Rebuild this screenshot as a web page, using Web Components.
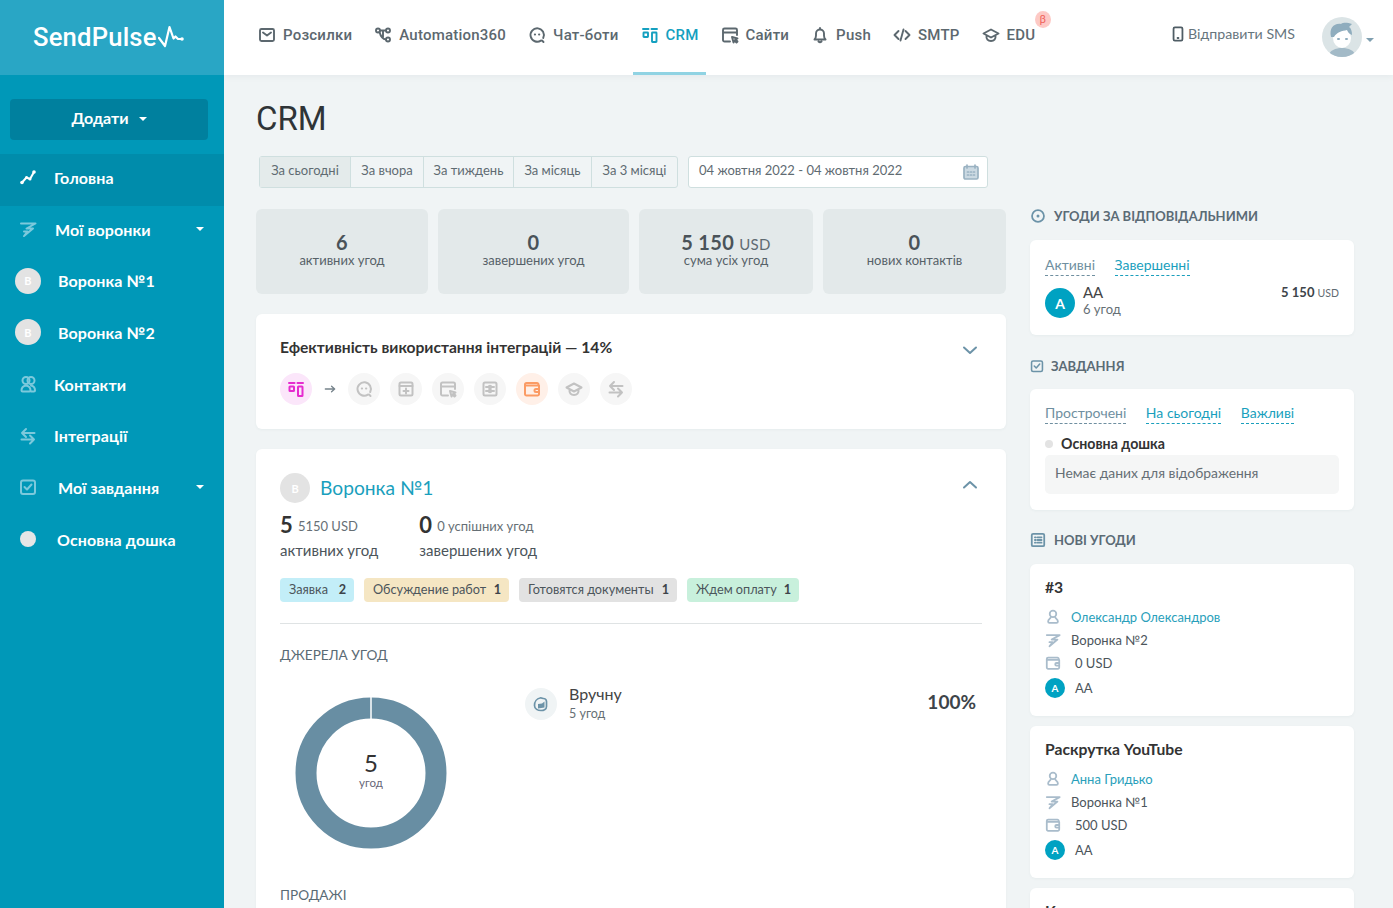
<!DOCTYPE html>
<html lang="uk">
<head>
<meta charset="utf-8">
<title>CRM</title>
<style>
  html, body { margin: 0; height: 100%; overflow: hidden; }
  body { font-family: Lato, "Noto Sans", sans-serif; color: #333; background: #f0f4f5; }
</style>
</head>
<body>
<sp-app>
  <sp-sidebar slot="side">
    <sp-nav-item icon="chart" active style="--gap:13px">Головна</sp-nav-item>
    <sp-nav-item icon="funnel" dim caret style="--gap:14px">Мої воронки</sp-nav-item>
    <sp-nav-item badge="В" style="--gap:17px">Воронка №1</sp-nav-item>
    <sp-nav-item badge="В" style="--gap:17px">Воронка №2</sp-nav-item>
    <sp-nav-item icon="contacts" dim style="--gap:13px">Контакти</sp-nav-item>
    <sp-nav-item icon="swap" dim style="--gap:13px">Інтеграції</sp-nav-item>
    <sp-nav-item icon="check" dim caret style="--gap:17px">Мої завдання</sp-nav-item>
    <sp-nav-item icon="dot" style="--gap:16px">Основна дошка</sp-nav-item>
  </sp-sidebar>

  <sp-topbar slot="top">
    <sp-top-item icon="mail">Розсилки</sp-top-item>
    <sp-top-item icon="nodes">Automation360</sp-top-item>
    <sp-top-item icon="bot">Чат-боти</sp-top-item>
    <sp-top-item icon="crm" active>CRM</sp-top-item>
    <sp-top-item icon="site">Сайти</sp-top-item>
    <sp-top-item icon="bell">Push</sp-top-item>
    <sp-top-item icon="code">SMTP</sp-top-item>
    <sp-top-item icon="edu" beta>EDU</sp-top-item>
  </sp-topbar>

  <sp-page>
    <sp-period-bar slot="head"></sp-period-bar>

    <sp-stat-row slot="left">
      <sp-stat value="6" style="--w:172">активних угод</sp-stat>
      <sp-stat value="0" style="--w:191">завершених угод</sp-stat>
      <sp-stat value="5 150" unit="USD" style="--w:174">сума усіх угод</sp-stat>
      <sp-stat value="0" style="--w:183">нових контактів</sp-stat>
    </sp-stat-row>

    <sp-integrations slot="left"></sp-integrations>
    <sp-funnel slot="left"></sp-funnel>

    <sp-side-heading slot="right" icon="target">Угоди за відповідальними</sp-side-heading>
    <sp-card slot="right" class="owners">
      <sp-tabs>
        <sp-tab muted>Активні</sp-tab>
        <sp-tab>Завершенні</sp-tab>
      </sp-tabs>
      <sp-owner-row></sp-owner-row>
    </sp-card>

    <sp-side-heading slot="right" icon="check" style="--gap:7px;--top:24px;--mb:16px;--hsize:14px">Завдання</sp-side-heading>
    <sp-card slot="right" class="tasks">
      <sp-tabs>
        <sp-tab muted>Прострочені</sp-tab>
        <sp-tab>На сьогодні</sp-tab>
        <sp-tab>Важливі</sp-tab>
      </sp-tabs>
      <sp-board-empty></sp-board-empty>
    </sp-card>

    <sp-side-heading slot="right" icon="list" style="--top:23px">Нові угоди</sp-side-heading>
    <sp-deal slot="right" title="#3" person="Олександр Олександров" funnel="Воронка №2" sum="0 USD"></sp-deal>
    <sp-deal slot="right" title="Раскрутка YouTube" person="Анна Гридько" funnel="Воронка №1" sum="500 USD"></sp-deal>
    <sp-deal slot="right" title="К"></sp-deal>
  </sp-page>
</sp-app>

<script>
const SP_ICONS = {
  chart: '<path d="M3 14.500 7.500 9.500 11 11 15 4" fill="none" stroke-width="2"/><circle cx="3" cy="14.500" r="1.800" fill="currentColor" stroke="none"/><circle cx="7.500" cy="9.500" r="1.500" fill="currentColor" stroke="none"/><circle cx="11" cy="11" r="1.500" fill="currentColor" stroke="none"/><circle cx="15" cy="4" r="1.800" fill="currentColor" stroke="none"/>',
  funnel: '<path d="M2 3.500H16.500L7.500 8.500H14L5 16 8.500 11.500H5"/>',
  contacts: '<circle cx="7" cy="5.500" r="3.500"/><circle cx="12" cy="5.500" r="3.500"/><path d="M2.500 15.500c0-3 1.500-4.500 4.500-5 3 .5 4.500 2 4.500 5 0 .5-.5 1-1 1H3.500c-.5 0-1-.5-1-1ZM12 10.500c2.500.5 4 2 4 5 0 .5-.5 1-1 1h-3"/>',
  swap: '<path d="M15.500 6H3M7 2 3 6 7 10M2.500 12.500H15M11 8.500l4 4-4 4"/>',
  check: '<rect x="2" y="2.500" width="14" height="13.500" rx="2"/><path d="M5.500 9 8 11.500 12.500 6.500"/>',
  mail: '<rect x="2" y="3" width="14" height="12" rx="1.500"/><path d="M5 6.500 9 9.500 13 6.500"/>',
  nodes: '<circle cx="4" cy="4.500" r="2"/><circle cx="14" cy="4.500" r="2"/><circle cx="14" cy="13.500" r="2"/><path d="M6 4.500h6M5.500 6c1 4 3 7 6.500 7.500M9 5v6"/>',
  bot: '<path d="M14 14.500 15.500 16M15.200 12a6.700 6.700 0 1 0-2.300 2.600"/><path d="M6.800 8.500h.3M11 8.500h.3"/>',
  crm: '<path d="M2 3h5.500M10.500 3H16"/><rect x="2.500" y="6.500" width="4.500" height="4.500" rx=".5"/><rect x="11" y="6.500" width="4.500" height="9.500" rx=".5"/>',
  site: '<path d="M9 15.500H3.500A1.500 1.500 0 0 1 2 14V4a1.500 1.500 0 0 1 1.500-1.500h11A1.500 1.500 0 0 1 16 4v5M2 6.500h14M11 11l5.500 1.500-2 1 2 2-1 1-2-2-1 2Z"/>',
  bell: '<path d="M3.500 13.500c1-1 1.500-2 1.500-4V7.500a4 4 0 0 1 8 0v2c0 2 .5 3 1.500 4ZM7.500 15.500c.8.800 2.200.800 3 0M9 2v1.500"/>',
  code: '<path d="M5.500 5 1.500 9l4 4M12.500 5l4 4-4 4M10.500 3.500l-3 11"/>',
  edu: '<path d="M1.500 7.500 9 3.500l7.500 4L9 11.500ZM4.500 9.500c-.5 3.500 1.500 5.500 4.500 5.500s5-2 4.500-5.500"/>',
  phone: '<rect x="4" y="1.500" width="10" height="15" rx="1.500"/><path d="M8.500 13.500h1"/>',
  wallet: '<path d="M15.500 5.500V4.500a1.500 1.500 0 0 0-1.500-1.500H3.500A1.500 1.500 0 0 0 2 4.500V14a1.500 1.500 0 0 0 1.500 1.500h11A1.500 1.500 0 0 0 16 14V5.500H3.500"/><path d="M16 9h-3a1.500 1.500 0 0 0 0 3h3"/>',
  user: '<circle cx="9" cy="5.500" r="3.700"/><path d="M6.500 9c0 2-3 2.500-3 5 0 1 .5 1.500 1.500 1.500h8c1 0 1.500-.5 1.500-1.500 0-2.500-3-3-3-5"/>',
  list: '<rect x="2" y="2" width="14" height="14" rx="1.500"/><path d="M5.500 6h1M8.500 6h4.500M5.500 9h1M8.500 9h4.500M5.500 12h1M8.500 12h4.500"/>',
  target: '<circle cx="9" cy="9" r="6.700"/><circle cx="9" cy="9" r="1.700" fill="currentColor" stroke="none"/>',
  calendar: '<rect x="2" y="3.500" width="14" height="12.500" rx="1.500" fill="#cbd9e2"/><path d="M5 2v3M13 2v3M5.500 9h1M8.500 9h1M11.500 9h1M5.500 12h1M8.500 12h1M11.500 12h1"/>',
  addwin: '<rect x="2.500" y="2.500" width="13" height="13" rx="1.500"/><path d="M2.500 6h13M9 8.500v5M6.500 11h5"/>',
  toggles: '<rect x="2.500" y="2.500" width="13" height="13" rx="1.500"/><path d="M5 7h2.500M10.500 7H13M5 11h2.500M10.500 11H13"/><circle cx="9" cy="7" r="1.200"/><circle cx="9" cy="11" r="1.200"/>',
  hand: '<path d="M2.500 10.500c0-4 2.500-7 5.500-7.500 1.500-.5 2.500.5 3.500.5s3 1 3 3v5c0 2.500-2.500 4-5.500 4S2.500 14 2.500 10.500Z"/><path d="M6 9v4.500l6.500-1V6.500L10 8.500Z" fill="currentColor" stroke="none"/>',
  arrow: '<path d="M3 9h12M11 5.500 15 9l-4 3.500"/>',
  up: '<path d="M3 11.500 9 6l6 5.500"/>',
  down: '<path d="M3 6.500 9 12l6-5.500"/>'
};

const sp_icon = document.createElement('template');
sp_icon.innerHTML = `
  <style>
    :host { display: inline-flex; width: var(--isize, 18px); height: var(--isize, 18px); flex: none; }
    svg { width: 100%; height: 100%; fill: none; stroke: currentColor; stroke-width: var(--sw, 1.700); stroke-linecap: round; stroke-linejoin: round; display: block; }
  </style>
  <svg viewBox="0 0 18 18"></svg>
`;
class SpIcon extends HTMLElement {
  static get observedAttributes() { return ['name']; }
  constructor() {
    super();
    this.attachShadow({ mode: 'open' });
    this.shadowRoot.appendChild(sp_icon.content.cloneNode(true));
  }
  attributeChangedCallback() {
    this.shadowRoot.querySelector('svg').innerHTML = SP_ICONS[this.getAttribute('name')] || '';
  }
}
customElements.define('sp-icon', SpIcon);

const sp_app = document.createElement('template');
sp_app.innerHTML = `
  <style>
    :host { display: grid; grid-template-columns: 224px 1fr; height: 908px; overflow: hidden; }
    .col { display: flex; flex-direction: column; min-width: 0; height: 908px; overflow: hidden; }
  </style>
  <slot name="side"></slot>
  <div class="col">
    <slot name="top"></slot>
    <slot></slot>
  </div>
`;
class SpApp extends HTMLElement {
  constructor() {
    super();
    this.attachShadow({ mode: 'open' }).appendChild(sp_app.content.cloneNode(true));
  }
}
customElements.define('sp-app', SpApp);

const sp_sidebar = document.createElement('template');
sp_sidebar.innerHTML = `
  <style>
    :host { display: block; background: #0098b8; color: #fff; height: 908px; }
    .logo { height: 75px; background: #29a6c5; display: flex; align-items: center; padding: 0 0 2px 33px; box-sizing: border-box; }
    .logo span { font: 500 25.600px Roboto, sans-serif; letter-spacing: .2px; }
    .logo svg { width: 26px; height: 23px; fill: none; stroke: #fff; stroke-width: 2.200; stroke-linecap: round; stroke-linejoin: round; margin-left: 1px; }
    .logo svg circle { fill: #fff; stroke: none; }
    .add { margin: 24px 16px 14px 10px; height: 41px; padding-bottom: 4px; box-sizing: border-box; background: #00809e; border-radius: 4px; display: flex; align-items: center; justify-content: center; gap: 10px; font-weight: 700; font-size: 16px; }
    .caret { border: 4px solid transparent; border-top-color: #fff; border-bottom: 0; margin-top: 3px; }
  </style>
  <div class="logo">
    <span>SendPulse</span>
    <svg viewBox="0 0 26 23"><path d="M1 13 7 21 11.500 2 15.500 13.500 17.500 11.500 20 14H23"/><circle cx="24" cy="14" r="1.800"/></svg>
  </div>
  <div class="add">Додати <i class="caret"></i></div>
  <slot></slot>
`;
class SpSidebar extends HTMLElement {
  constructor() {
    super();
    this.attachShadow({ mode: 'open' }).appendChild(sp_sidebar.content.cloneNode(true));
  }
}
customElements.define('sp-sidebar', SpSidebar);

const sp_nav_item = document.createElement('template');
sp_nav_item.innerHTML = `
  <style>
    :host { display: flex; align-items: center; height: 51.700px; padding: 0 20px 5px 15px; box-sizing: border-box; font-weight: 700; font-size: 16px; letter-spacing: .1px; color: #fff; --sw: 2; }
    :host([active]) { background: #008cab; }
    .lead { width: 26px; height: 26px; display: flex; align-items: center; justify-content: center; margin-right: var(--gap, 13px); flex: none; }
    .lead.dim { color: #7cc9dc; }
    .badge { width: 26px; height: 26px; border-radius: 50%; background: #e3e3e3; color: #fff; font-size: 11px; display: flex; align-items: center; justify-content: center; }
    .dotted { width: 16px; height: 16px; border-radius: 50%; background: #e6e6e6; }
    .text { flex: 1; }
    .caret { border: 4px solid transparent; border-top-color: #fff; border-bottom: 0; }
  </style>
  <span class="lead"></span>
  <span class="text"><slot></slot></span>
`;
class SpNavItem extends HTMLElement {
  constructor() {
    super();
    this.attachShadow({ mode: 'open' }).appendChild(sp_nav_item.content.cloneNode(true));
  }
  connectedCallback() {
    const lead = this.shadowRoot.querySelector('.lead');
    const icon = this.getAttribute('icon');
    if (this.hasAttribute('badge')) {
      lead.innerHTML = '<span class="badge">' + this.getAttribute('badge') + '</span>';
    } else if (icon === 'dot') {
      lead.innerHTML = '<span class="dotted"></span>';
    } else {
      lead.innerHTML = '<sp-icon name="' + icon + '"></sp-icon>';
    }
    if (this.hasAttribute('dim')) lead.classList.add('dim');
    if (this.hasAttribute('caret')) {
      const c = document.createElement('i');
      c.className = 'caret';
      this.shadowRoot.appendChild(c);
    }
  }
}
customElements.define('sp-nav-item', SpNavItem);

const sp_topbar = document.createElement('template');
sp_topbar.innerHTML = `
  <style>
    :host { display: flex; align-items: stretch; height: 75px; flex: none; background: #fff; padding-left: 26.500px; box-sizing: border-box; box-shadow: 0 2px 6px rgba(60,90,100,.06); position: relative; }
    nav { display: flex; align-items: stretch; flex: 1; gap: 7px; }
    .sms { display: flex; align-items: center; gap: 2px; color: #66757d; font: 400 14.200px Lato, sans-serif; margin-right: 27px; padding-bottom: 8px; }
    .sms sp-icon { color: #4f5d65; --isize: 16px; --sw: 2; }
    .me { display: flex; align-items: center; margin-right: 19px; padding-bottom: 1px; }
    .me svg { width: 40px; height: 40px; display: block; }
    .caret { border: 4px solid transparent; border-top-color: #7f9fb0; border-bottom: 0; margin: 6px 0 0 4px; }
  </style>
  <nav><slot></slot></nav>
  <div class="sms"><sp-icon name="phone"></sp-icon>Відправити SMS</div>
  <div class="me">
    <svg viewBox="0 0 40 40">
      <clipPath id="av"><circle cx="20" cy="20" r="20"/></clipPath>
      <g clip-path="url(#av)">
        <rect width="40" height="40" fill="#dbe4e6"/>
        <path d="M6 40c1-7 8-9 14-9s13 2 14 9Z" fill="#a3bac7"/>
        <ellipse cx="20" cy="21" rx="9" ry="10" fill="#fff"/>
        <path d="M9 20c-2-9 3-14 10-13 3-2 7-1 11 0l-3 3c2 1 3 4 3 8-3-1-4-3-5-5-5 1-10 2-13 7Z" fill="#8fadbe"/>
        <path d="M16 22h1M24 22h1" stroke="#8fadbe" stroke-width="2" stroke-linecap="round"/>
      </g>
    </svg>
    <i class="caret"></i>
  </div>
`;
class SpTopbar extends HTMLElement {
  constructor() {
    super();
    this.attachShadow({ mode: 'open' }).appendChild(sp_topbar.content.cloneNode(true));
  }
}
customElements.define('sp-topbar', SpTopbar);

const sp_top_item = document.createElement('template');
sp_top_item.innerHTML = `
  <style>
    :host { display: flex; align-items: center; gap: 7px; padding: 0 7.500px 6px; position: relative; color: #5c686f; font: 500 15px Roboto, sans-serif; letter-spacing: .22px; --sw: 1.900; }
    :host([active]) { color: #14a0c0; }
    :host([active])::after { content: ""; position: absolute; left: 0; right: 0; bottom: 0; height: 3px; background: #90d3e3; }
    .beta { position: absolute; right: -8px; top: 11px; width: 16px; height: 17px; border-radius: 50%; background: #fdc9c5; color: #f0625a; font-size: 11px; display: none; align-items: center; justify-content: center; letter-spacing: 0; font-weight: 400; }
    :host([beta]) .beta { display: flex; }
  </style>
  <sp-icon></sp-icon>
  <span><slot></slot></span>
  <span class="beta">β</span>
`;
class SpTopItem extends HTMLElement {
  constructor() {
    super();
    this.attachShadow({ mode: 'open' }).appendChild(sp_top_item.content.cloneNode(true));
  }
  connectedCallback() {
    this.shadowRoot.querySelector('sp-icon').setAttribute('name', this.getAttribute('icon'));
  }
}
customElements.define('sp-top-item', SpTopItem);

const sp_page = document.createElement('template');
sp_page.innerHTML = `
  <style>
    :host { display: block; padding: 20px 39px 0 32px; flex: 1; min-height: 0; }
    h1 { margin: 0 0 14px 0; font: 400 33px/47px Roboto, sans-serif; color: #2f3437; }
    .cols { display: grid; grid-template-columns: 750px 324px; gap: 24px; margin-top: 21px; align-items: start; }
    .stack { display: flex; flex-direction: column; min-width: 0; }
  </style>
  <h1>CRM</h1>
  <slot name="head"></slot>
  <div class="cols">
    <div class="stack"><slot name="left"></slot></div>
    <div class="stack"><slot name="right"></slot></div>
  </div>
`;
class SpPage extends HTMLElement {
  constructor() {
    super();
    this.attachShadow({ mode: 'open' }).appendChild(sp_page.content.cloneNode(true));
  }
}
customElements.define('sp-page', SpPage);

const sp_period_bar = document.createElement('template');
sp_period_bar.innerHTML = `
  <style>
    :host { display: flex; gap: 10px; padding-left: 3px; height: 32px; font-size: 13px; color: #5f6b72; }
    .tabs { display: flex; border: 1px solid #cfdfdf; border-radius: 3px; }
    .tabs span { display: flex; align-items: center; justify-content: center; border-left: 1px solid #cfdfdf; box-sizing: border-box; padding-bottom: 4px; }
    .tabs span:first-child { border-left: 0; background: #e4ebeb; }
    .date { width: 300px; box-sizing: border-box; background: #fff; border: 1px solid #cfdfdf; border-radius: 3px; display: flex; align-items: center; justify-content: space-between; padding: 0 7px 0 10px; }
    .date span { padding-bottom: 4px; }
    .date sp-icon { color: #9ab2c2; }
  </style>
  <div class="tabs">
    <span style="width:90px">За сьогодні</span>
    <span style="width:73px">За вчора</span>
    <span style="width:90px">За тиждень</span>
    <span style="width:78px">За місяць</span>
    <span style="width:86px">За 3 місяці</span>
  </div>
  <div class="date"><span>04 жовтня 2022 - 04 жовтня 2022</span> <sp-icon name="calendar"></sp-icon></div>
`;
class SpPeriodBar extends HTMLElement {
  constructor() {
    super();
    this.attachShadow({ mode: 'open' }).appendChild(sp_period_bar.content.cloneNode(true));
  }
}
customElements.define('sp-period-bar', SpPeriodBar);

const sp_stat_row = document.createElement('template');
sp_stat_row.innerHTML = `
  <style>
    :host { display: flex; gap: 10px; margin-bottom: 20px; }
  </style>
  <slot></slot>
`;
class SpStatRow extends HTMLElement {
  constructor() {
    super();
    this.attachShadow({ mode: 'open' }).appendChild(sp_stat_row.content.cloneNode(true));
  }
}
customElements.define('sp-stat-row', SpStatRow);

const sp_stat = document.createElement('template');
sp_stat.innerHTML = `
  <style>
    :host { display: flex; flex-direction: column; align-items: center; justify-content: center; flex: var(--w) 1 0; height: 85px; background: #e3e9ea; border-radius: 6px; padding-bottom: 3px; box-sizing: border-box; font-size: 13px; color: #566168; }
    b { font-size: 20px; line-height: 20px; font-weight: 700; color: #4a5359; letter-spacing: .3px; }
    small { font-size: 15px; font-weight: 400; color: #5f6b72; }
    div { line-height: 15px; margin-top: -1px; }
  </style>
  <b><span class="v"></span> <small></small></b>
  <div><slot></slot></div>
`;
class SpStat extends HTMLElement {
  constructor() {
    super();
    this.attachShadow({ mode: 'open' }).appendChild(sp_stat.content.cloneNode(true));
  }
  connectedCallback() {
    this.shadowRoot.querySelector('.v').textContent = this.getAttribute('value');
    this.shadowRoot.querySelector('small').textContent = this.getAttribute('unit') || '';
  }
}
customElements.define('sp-stat', SpStat);

const sp_card = document.createElement('template');
sp_card.innerHTML = `
  <style>
    :host { display: block; background: #fff; border-radius: 6px; padding: 15px; box-shadow: 0 1px 3px rgba(60,90,100,.05); }
    :host(.owners) { padding-bottom: 17px; }
    :host(.tasks) { padding-top: 14px; padding-bottom: 16px; }
  </style>
  <slot></slot>
`;
class SpCard extends HTMLElement {
  constructor() {
    super();
    this.attachShadow({ mode: 'open' }).appendChild(sp_card.content.cloneNode(true));
  }
}
customElements.define('sp-card', SpCard);

const sp_integrations = document.createElement('template');
sp_integrations.innerHTML = `
  <style>
    :host { display: block; background: #fff; border-radius: 6px; padding: 23px 24px 24px; height: 115px; box-sizing: border-box; margin-bottom: 20px; box-shadow: 0 1px 3px rgba(60,90,100,.05); position: relative; --sw: 2; }
    .t { font-weight: 700; font-size: 15.600px; line-height: 20px; color: #333; }
    .row { display: flex; gap: 10px; margin-top: 16px; align-items: center; }
    .c { width: 32px; height: 32px; border-radius: 50%; background: #f6f6f6; color: #c2c2c2; display: flex; align-items: center; justify-content: center; }
    .c.pink { background: #fbe6fa; color: #e62ccf; }
    .c.orange { background: #fff0e8; color: #fb9b64; }
    .arr { color: #76838b; --isize: 14px; margin: 0 1px 0 1px; width: 14px; --sw: 1.700; }
    .chev { position: absolute; right: 27px; top: 27px; color: #6c93a8; --isize: 18px; }
  </style>
  <div class="t">Ефективність використання інтеграцій — 14%</div>
  <sp-icon class="chev" name="down"></sp-icon>
  <div class="row">
    <span class="c pink"><sp-icon name="crm"></sp-icon></span>
    <sp-icon class="arr" name="arrow"></sp-icon>
    <span class="c"><sp-icon name="bot"></sp-icon></span>
    <span class="c"><sp-icon name="addwin"></sp-icon></span>
    <span class="c"><sp-icon name="site"></sp-icon></span>
    <span class="c"><sp-icon name="toggles"></sp-icon></span>
    <span class="c orange"><sp-icon name="wallet"></sp-icon></span>
    <span class="c"><sp-icon name="edu"></sp-icon></span>
    <span class="c"><sp-icon name="swap"></sp-icon></span>
  </div>
`;
class SpIntegrations extends HTMLElement {
  constructor() {
    super();
    this.attachShadow({ mode: 'open' }).appendChild(sp_integrations.content.cloneNode(true));
  }
}
customElements.define('sp-integrations', SpIntegrations);

const sp_funnel = document.createElement('template');
sp_funnel.innerHTML = `
  <style>
    :host { display: block; background: #fff; border-radius: 6px 6px 0 0; padding: 24px 24px 60px; position: relative; box-shadow: 0 1px 3px rgba(60,90,100,.05); }
    .head { display: flex; align-items: center; gap: 10px; height: 30px; }
    .ava { width: 30px; height: 30px; border-radius: 50%; background: #e3e3e3; color: #fff; font-size: 11px; font-weight: 700; display: flex; align-items: center; justify-content: center; }
    .name { font-size: 19.200px; color: #1a9fbd; padding-bottom: 2px; }
    .chev { position: absolute; right: 27px; top: 27px; color: #6c93a8; --isize: 18px; --sw: 2; }
    .nums { display: flex; gap: 41px; margin-top: 8px; }
    .num b { font-size: 22px; line-height: 28px; font-weight: 700; color: #333; }
    .num span { font-size: 13px; color: #666f75; margin-left: 1px; vertical-align: 2px; }
    .num div { font-size: 15px; line-height: 24px; color: #4c555b; margin-top: -1px; }
    .pills { display: flex; gap: 10px; margin-top: 16px; padding-bottom: 21px; border-bottom: 1px solid #dfe3e4; }
    h3 { margin: 22px 0 0; font-size: 13.600px; line-height: 18px; font-weight: 400; color: #5a6b75; text-transform: uppercase; }
    .src { display: grid; grid-template-columns: 245px 1fr auto; margin-top: 23px; height: 177px; }
    .donut { position: relative; width: 152px; height: 152px; margin: 10px 0 0 15px; }
    .donut svg { width: 152px; height: 152px; display: block; }
    .mid { position: absolute; inset: 0; display: flex; flex-direction: column; align-items: center; justify-content: center; font-size: 11.500px; color: #667; padding-bottom: 7px; box-sizing: border-box; }
    .mid b { font-size: 24px; font-weight: 400; line-height: 26px; color: #333; }
    .leg { display: flex; gap: 12px; align-items: flex-start; }
    .round { width: 32px; height: 32px; border-radius: 50%; background: #f0f4f5; color: #6c93a8; display: flex; align-items: center; justify-content: center; margin-top: 1px; }
    .leg .txt { margin-top: -3px; }
    .leg .txt div { font-size: 16px; line-height: 20px; color: #444; }
    .leg small { font-size: 12.500px; color: #666f75; line-height: 18px; display: block; margin-top: 1px; }
    .pct { font-size: 19px; line-height: 22px; font-weight: 700; color: #3d4449; padding: 4px 6px 0 0; }
  </style>
  <div class="head"><span class="ava">В</span><span class="name">Воронка №1</span></div>
  <sp-icon class="chev" name="up"></sp-icon>
  <div class="nums">
    <div class="num"><b>5</b> <span>5150 USD</span><div>активних угод</div></div>
    <div class="num"><b>0</b> <span>0 успішних угод</span><div>завершених угод</div></div>
  </div>
  <div class="pills">
    <sp-stage count="2" style="--bg:#c3eef8;--w:74px">Заявка</sp-stage>
    <sp-stage count="1" style="--bg:#f5e6c3;--w:145px">Обсуждение работ</sp-stage>
    <sp-stage count="1" style="--bg:#e2e2e2;--w:158px">Готовятся документы</sp-stage>
    <sp-stage count="1" style="--bg:#c8f0dc;--w:112px">Ждем оплату</sp-stage>
  </div>
  <h3>Джерела угод</h3>
  <div class="src">
    <div class="donut">
      <svg viewBox="0 0 152 152"><circle cx="76" cy="76" r="65" fill="none" stroke="#688ea3" stroke-width="21"/><path d="M76 0v22" stroke="#fff" stroke-width="1.500"/></svg>
      <div class="mid"><b>5</b>угод</div>
    </div>
    <div class="leg">
      <span class="round"><sp-icon name="hand"></sp-icon></span>
      <div class="txt"><div>Вручну</div><small>5 угод</small></div>
    </div>
    <div class="pct">100%</div>
  </div>
  <h3>Продажі</h3>
`;
class SpFunnel extends HTMLElement {
  constructor() {
    super();
    this.attachShadow({ mode: 'open' }).appendChild(sp_funnel.content.cloneNode(true));
  }
}
customElements.define('sp-funnel', SpFunnel);

const sp_stage = document.createElement('template');
sp_stage.innerHTML = `
  <style>
    :host { display: inline-flex; align-items: center; justify-content: space-between; width: var(--w); box-sizing: border-box; height: 24px; padding: 0 8px 2px 9px; border-radius: 4px; background: var(--bg); font-size: 12.700px; color: #4c555b; }
    b { color: #3d4449; font-weight: 700; }
  </style>
  <span><slot></slot></span><b></b>
`;
class SpStage extends HTMLElement {
  constructor() {
    super();
    this.attachShadow({ mode: 'open' }).appendChild(sp_stage.content.cloneNode(true));
  }
  connectedCallback() {
    this.shadowRoot.querySelector('b').textContent = this.getAttribute('count');
  }
}
customElements.define('sp-stage', SpStage);

const sp_side_heading = document.createElement('template');
sp_side_heading.innerHTML = `
  <style>
    :host { display: flex; align-items: center; gap: var(--gap, 8px); height: 14px; margin: var(--top, 0) 0 var(--mb, 17px); font-size: 13px; font-weight: 700; text-transform: uppercase; color: #5b6b75; }
    sp-icon { color: #6c93a8; --isize: var(--hsize, 16px); --sw: 2; }
  </style>
  <sp-icon></sp-icon><span><slot></slot></span>
`;
class SpSideHeading extends HTMLElement {
  constructor() {
    super();
    this.attachShadow({ mode: 'open' }).appendChild(sp_side_heading.content.cloneNode(true));
  }
  connectedCallback() {
    this.shadowRoot.querySelector('sp-icon').setAttribute('name', this.getAttribute('icon'));
  }
}
customElements.define('sp-side-heading', SpSideHeading);

const sp_tabs = document.createElement('template');
sp_tabs.innerHTML = `
  <style>
    :host { display: flex; gap: 19.500px; height: 21px; margin-bottom: 8px; }
  </style>
  <slot></slot>
`;
class SpTabs extends HTMLElement {
  constructor() {
    super();
    this.attachShadow({ mode: 'open' }).appendChild(sp_tabs.content.cloneNode(true));
  }
}
customElements.define('sp-tabs', SpTabs);

const sp_tab = document.createElement('template');
sp_tab.innerHTML = `
  <style>
    :host { display: block; font-size: 14px; line-height: 20px; color: #1a9fbd; border-bottom: 1px dashed #1a9fbd; }
    :host([muted]) { color: #6f8fa0; border-bottom-color: #6f8fa0; }
  </style>
  <slot></slot>
`;
class SpTab extends HTMLElement {
  constructor() {
    super();
    this.attachShadow({ mode: 'open' }).appendChild(sp_tab.content.cloneNode(true));
  }
}
customElements.define('sp-tab', SpTab);

const sp_owner_row = document.createElement('template');
sp_owner_row.innerHTML = `
  <style>
    :host { display: flex; align-items: flex-start; gap: 8px; }
    .ava { width: 30px; height: 30px; border-radius: 50%; background: #00a2c2; color: #fff; font-size: 14px; font-weight: 700; display: flex; align-items: center; justify-content: center; margin-top: 4px; }
    .who { flex: 1; font-size: 15px; line-height: 17px; color: #444; }
    small { display: block; font-size: 13px; color: #666f75; }
    .sum { font-size: 13px; font-weight: 700; color: #3d4449; line-height: 17px; }
    .sum span { font-size: 10.500px; font-weight: 400; color: #5f6b72; }
  </style>
  <span class="ava">А</span>
  <div class="who">АА<small>6 угод</small></div>
  <div class="sum">5 150 <span>USD</span></div>
`;
class SpOwnerRow extends HTMLElement {
  constructor() {
    super();
    this.attachShadow({ mode: 'open' }).appendChild(sp_owner_row.content.cloneNode(true));
  }
}
customElements.define('sp-owner-row', SpOwnerRow);

const sp_board_empty = document.createElement('template');
sp_board_empty.innerHTML = `
  <style>
    :host { display: block; }
    .b { display: flex; align-items: center; gap: 8px; font-size: 14.200px; font-weight: 700; line-height: 18px; color: #333; margin-top: 11px; }
    .b i { width: 8px; height: 8px; border-radius: 50%; background: #e3e3e3; }
    .e { margin-top: 2px; background: #f5f6f6; border-radius: 5px; height: 39px; display: flex; align-items: center; padding: 0 0 4px 10px; box-sizing: border-box; font-size: 13.900px; color: #666f75; }
  </style>
  <div class="b"><i></i>Основна дошка</div>
  <div class="e">Немає даних для відображення</div>
`;
class SpBoardEmpty extends HTMLElement {
  constructor() {
    super();
    this.attachShadow({ mode: 'open' }).appendChild(sp_board_empty.content.cloneNode(true));
  }
}
customElements.define('sp-board-empty', SpBoardEmpty);

const sp_deal = document.createElement('template');
sp_deal.innerHTML = `
  <style>
    :host { display: block; background: #fff; border-radius: 6px; padding: 13px 15px 0; height: 152px; box-sizing: border-box; margin-bottom: 10px; font-size: 13px; color: #4c555b; box-shadow: 0 1px 3px rgba(60,90,100,.05); }
    .t { font-weight: 700; font-size: 15.700px; line-height: 20px; color: #333; margin-bottom: 8px; }
    .r { display: flex; align-items: center; height: 23px; }
    .r sp-icon { color: #a9bccb; --isize: 16px; margin: 0 10px 0 0; --sw: 2; }
    .p { color: #2a9fbb; }
    .i { margin-left: 4px; }
    .ava { width: 20px; height: 20px; border-radius: 50%; background: #00a2c2; color: #fff; font-size: 10px; font-weight: 700; display: flex; align-items: center; justify-content: center; margin-right: 10px; }
    .last { margin-top: 2px; }
  </style>
  <div class="t"></div>
  <div class="r"><sp-icon name="user"></sp-icon><span class="p"></span></div>
  <div class="r"><sp-icon name="funnel"></sp-icon><span class="f"></span></div>
  <div class="r"><sp-icon name="wallet"></sp-icon><span class="s i"></span></div>
  <div class="r last"><span class="ava">А</span>АА</div>
`;
class SpDeal extends HTMLElement {
  constructor() {
    super();
    this.attachShadow({ mode: 'open' }).appendChild(sp_deal.content.cloneNode(true));
  }
  connectedCallback() {
    const root = this.shadowRoot;
    root.querySelector('.t').textContent = this.getAttribute('title');
    if (!this.hasAttribute('person')) {
      root.querySelectorAll('.r').forEach(function (r) { r.remove(); });
      return;
    }
    root.querySelector('.p').textContent = this.getAttribute('person');
    root.querySelector('.f').textContent = this.getAttribute('funnel');
    root.querySelector('.s').textContent = this.getAttribute('sum');
  }
}
customElements.define('sp-deal', SpDeal);
</script>
</body>
</html>
